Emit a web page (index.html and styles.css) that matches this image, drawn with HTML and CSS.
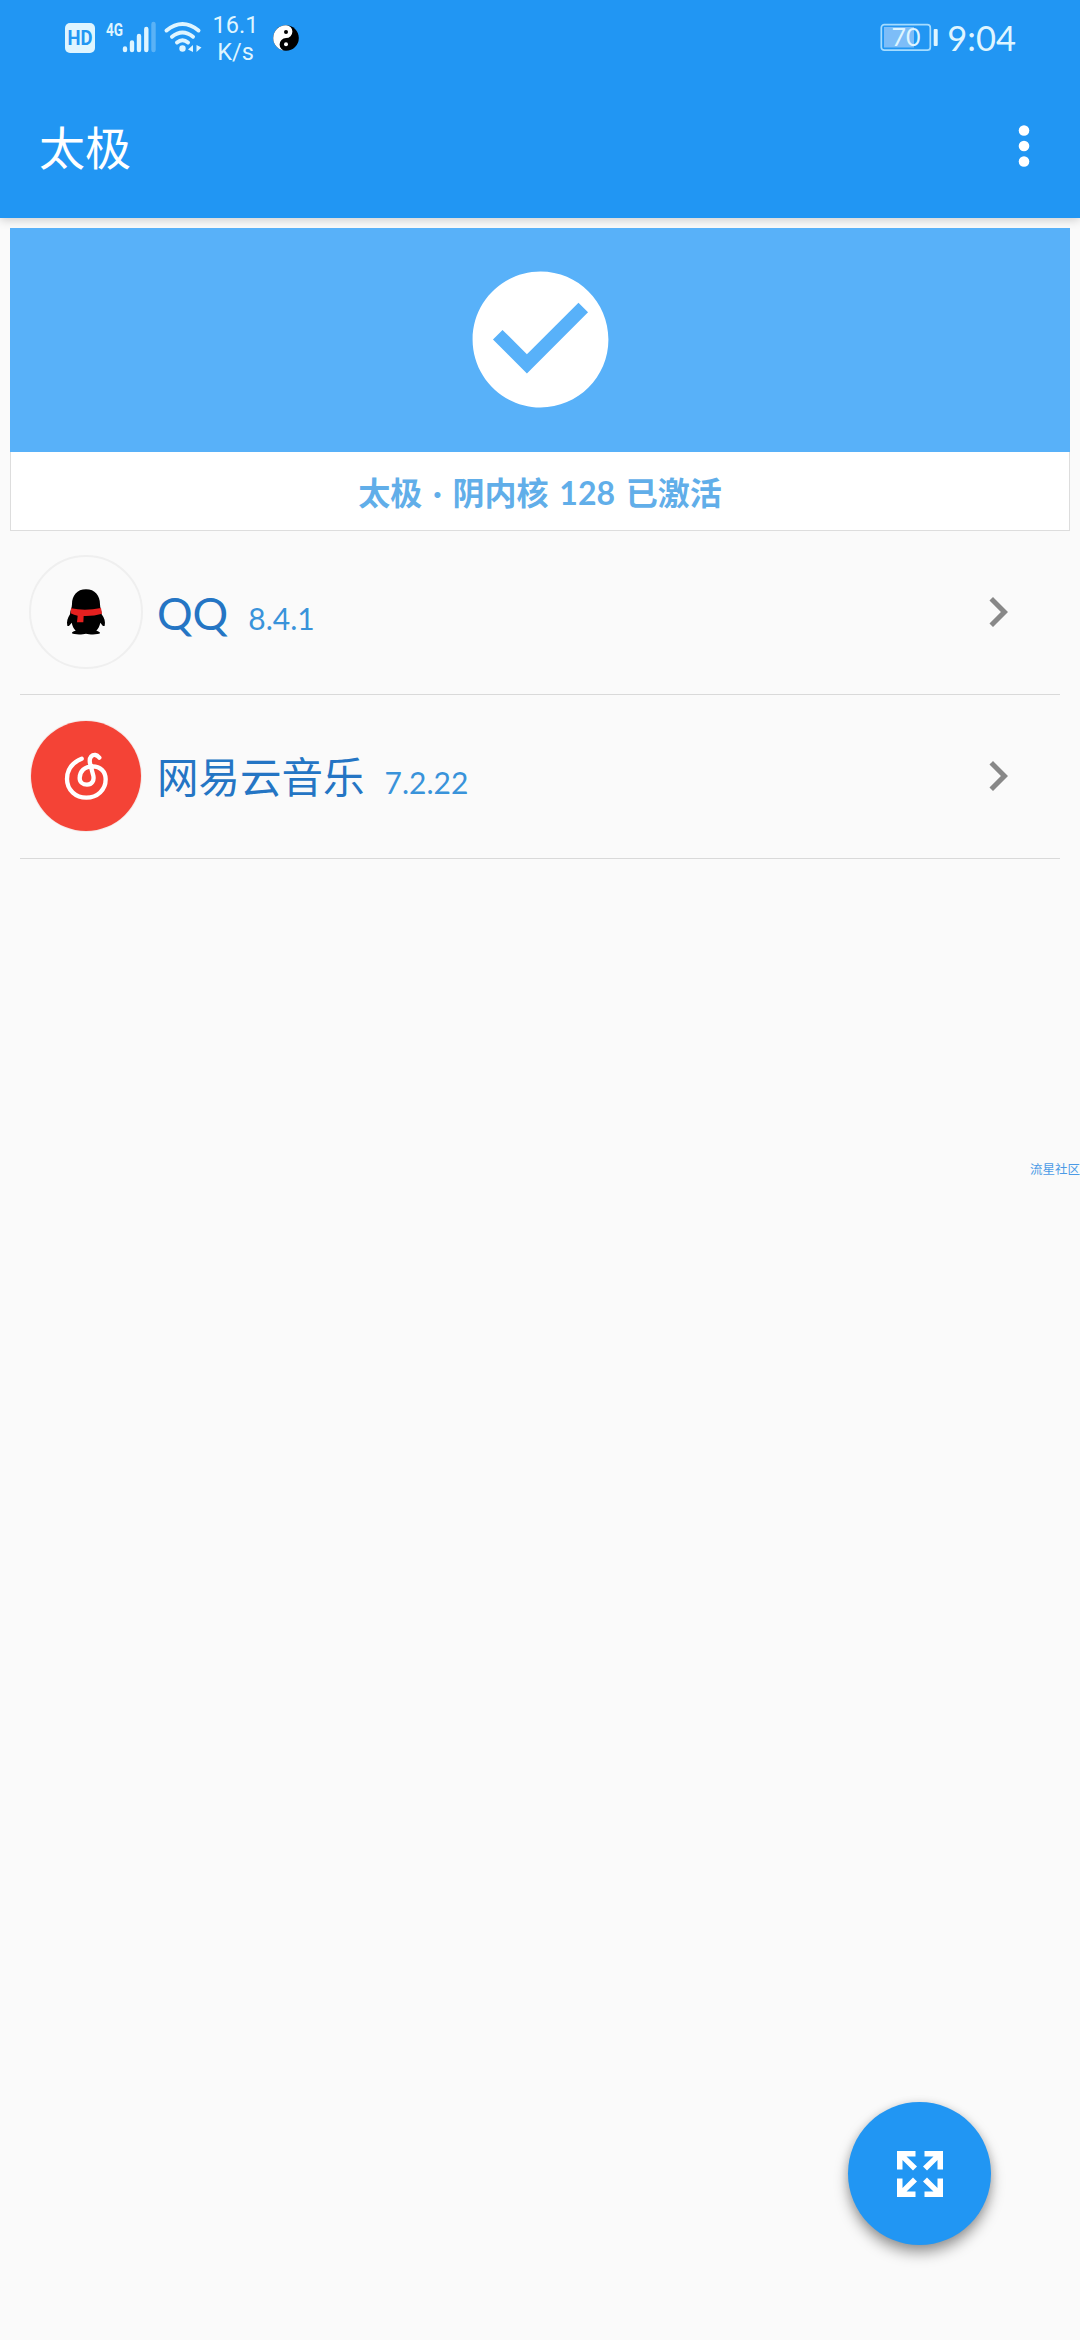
FILE: index.html
```html
<!DOCTYPE html>
<html lang="zh-CN">
<head>
<meta charset="utf-8">
<title>太极</title>
<link rel="stylesheet" href="styles.css">
</head>
<body>
<header class="header">
  <div class="status">
    <svg class="status-icons" viewBox="0 0 144 76">
      <rect x="0" y="23" width="30" height="30" rx="5" fill="#dff5ff"/>
      <text class="hd" x="15" y="45" text-anchor="middle" textLength="25" lengthAdjust="spacingAndGlyphs">HD</text>
      <text class="net" x="41" y="36" textLength="17" lengthAdjust="spacingAndGlyphs">4G</text>
      <g stroke="#dff5ff" stroke-width="4.4" stroke-linecap="round">
        <path d="M60 48.5v1.5M67 42.500v7.500M74 36v14M81.300 29v21"/>
        <path d="M88.500 24v26" opacity=".3"/>
      </g>
      <g fill="none" stroke="#dff5ff" stroke-width="4" stroke-linecap="round">
        <path d="M101.500 30.500q16-13 32 0"/>
        <path d="M107 36.700q10.500-8.500 21 0"/>
        <path d="M112 42.500q5.500-4.500 11 0"/>
      </g>
      <circle cx="117.500" cy="48.500" r="3.200" fill="#dff5ff"/>
      <path d="M128 45v7l-5-2.500zM131.500 45v7l5-4.500z" fill="#dff5ff"/>
    </svg>
    <div class="speed"><span>16.1</span><span>K/s</span></div>
    <svg class="taiji" viewBox="0 0 26 26">
      <circle cx="13" cy="13" r="12.800" fill="#000"/>
      <path d="M13 .2a12.800 12.800 0 0 0 0 25.600a6.400 6.400 0 0 1 0-12.800a6.400 6.400 0 0 0 0-12.800z" fill="#fff"/>
      <circle cx="13" cy="6.900" r="2" fill="#000"/>
      <circle cx="13" cy="19.300" r="2" fill="#fff"/>
    </svg>
    <div class="status-right">
      <svg class="battery" viewBox="0 0 60 40">
        <rect x="1.300" y="6.700" width="49" height="25.500" rx="3" fill="none" stroke="#a5dcff" stroke-width="1.700"/>
        <rect x="4" y="9" width="30" height="20.500" fill="#7dbdf8"/>
        <rect x="53.700" y="11" width="4" height="17" rx="1" fill="#dff5ff"/>
        <text class="level" x="26" y="28" text-anchor="middle">70</text>
      </svg>
      <span class="clock">9:04</span>
    </div>
  </div>
  <div class="appbar">
    <h1 class="title">太极</h1>
    <svg class="more" viewBox="0 0 12 44"><circle cx="6" cy="6.500" r="5.300"/><circle cx="6" cy="22" r="5.300"/><circle cx="6" cy="37.500" r="5.300"/></svg>
  </div>
</header>
<main class="content">
  <section class="card">
    <div class="banner">
      <svg class="check" viewBox="0 0 24 24"><path d="M12 2C6.480 2 2 6.480 2 12s4.480 10 10 10 10-4.480 10-10S17.520 2 12 2zm-2 15l-5-5 1.410-1.410L10 14.170l7.590-7.590L19 8l-9 9z"/></svg>
    </div>
    <div class="state">太极 · 阴内核 128 已激活</div>
  </section>
  <ul class="apps">
    <li class="app">
      <svg class="avatar" viewBox="0 0 114 114">
        <circle cx="57" cy="57" r="56" fill="#fafafa" stroke="#efefef" stroke-width="2"/>
        <g transform="translate(-29 -35) scale(.33333)">
          <path d="M258 208c-27 0-42 19-42 45c0 10-6 20-6 30c-7 10-11 23-8 34c2 4 8-2 13-9c2 10 6 17 12 24c-8 2-13 5-11 8c5 4 32 4 42 1c10 3 37 3 42-1c2-3-4-6-11-8c6-7 10-14 12-24c5 7 10 13 13 9c3-11-1-24-9-34c0-10-5-20-5-30c0-26-15-45-42-45z" fill="#000"/>
          <path d="M213 265q43 9 90-1l3 17q-25 8-55 7l-1 19h-19l2-20q-11-1-21-7z" fill="#e5201f"/>
        </g>
      </svg>
      <span class="name latin">QQ</span><span class="version">8.4.1</span>
      <svg class="chevron" viewBox="0 0 24 24"><path d="M10 6L8.590 7.410 13.170 12l-4.580 4.590L10 18l6-6z"/></svg>
    </li>
    <li class="app">
      <svg class="avatar" viewBox="0 0 114 114">
        <circle cx="57" cy="57" r="56" fill="#f5e9e8"/>
        <circle cx="57" cy="57" r="55" fill="#f44336"/>
        <path transform="translate(-29 -29) scale(.33333)" d="M245 206C216 218 201 240 201 267C201 301 228 323 259 323C292 323 317 300 317 268C317 244 300 229 278 229C254 229 239 244 239 264C239 277 249 284 261 284C276 284 283 272 280 257L270 220C266 200 278 194 286 195Q292 196 298 203" fill="none" stroke="#fff" stroke-width="13" stroke-linecap="round"/>
      </svg>
      <span class="name">网易云音乐</span><span class="version">7.2.22</span>
      <svg class="chevron" viewBox="0 0 24 24"><path d="M10 6L8.590 7.410 13.170 12l-4.580 4.590L10 18l6-6z"/></svg>
    </li>
  </ul>
</main>
<div class="watermark">流星社区</div>
<button class="fab" aria-label="全屏">
  <svg viewBox="0 0 46 46"><path d="M0 0h18.500v5.500h-9l10.500 10-4 4L5.500 9v9.500H0zM46 0v18.500h-5.500V9L30 19.500l-4-4L36.500 5.500h-9V0zM0 46V27.500h5.500V37L16 26.500l4 4L9.500 40.500h9V46zM46 46H27.500v-5.500h9L26 30.500l4-4L40.500 37v-9.500H46z"/></svg>
</button>
</body>
</html>
```
FILE: styles.css
```css
* { box-sizing: border-box; margin: 0; padding: 0; }
body {
  position: relative;
  width: 1080px;
  height: 2340px;
  overflow: hidden;
  background: #fafafa;
  font-family: Lato, "Noto Sans CJK SC", sans-serif;
}
svg { display: block; flex: none; overflow: visible; }
.header {
  height: 218px;
  background: #2196f3;
  box-shadow: 0 2px 9px rgba(0, 0, 0, .18);
}
.status {
  display: flex;
  height: 76px;
  padding: 0 64px 0 65px;
  color: #dff5ff;
}
.status-icons { width: 144px; height: 76px; }
.hd { font: 700 21px Roboto, sans-serif; fill: #2196f3; }
.net { font: 700 19px Roboto, sans-serif; fill: #dff5ff; }
.speed {
  display: flex;
  flex-direction: column;
  width: 53px;
  padding-top: 12px;
  text-align: center;
  font: 23.500px/27px Roboto, sans-serif;
}
.taiji { width: 26px; height: 26px; margin: 25px 0 0 11px; }
.status-right { display: flex; margin-left: auto; }
.battery { width: 60px; height: 40px; margin: 18px 7px 0 0; }
.level { font: 25px Lato, sans-serif; fill: #dff5ff; }
.clock { font-size: 34.500px; line-height: 40px; margin-top: 18px; }
.appbar {
  display: flex;
  align-items: center;
  justify-content: space-between;
  height: 142px;
  padding: 0 50px 2px 39px;
}
.title { margin-top: 4px; color: #fff; font-size: 46px; font-weight: 400; line-height: 60px; }
.more { width: 12px; height: 44px; fill: #fff; }
.content { padding: 10px; }
.card { height: 303px; border: 1px solid #ddd; border-top: 0; background: #fff; }
.banner {
  display: flex;
  justify-content: center;
  height: 224px;
  margin: 0 -1px;
  padding-top: 30px;
  background: #58b1f9;
}
.check { width: 163px; height: 163px; fill: #fff; }
.state {
  text-align: center;
  line-height: 82px;
  font-size: 32px;
  font-weight: 700;
  word-spacing: 3px;
  color: #61aee9;
}
.apps { padding: 0 10px; list-style: none; }
.app {
  display: flex;
  align-items: center;
  height: 164px;
  border-bottom: 1px solid #d9d9d9;
  padding: 0 32px 0 9px;
}
.avatar { width: 114px; height: 114px; margin-bottom: 2px; }
.name { margin-left: 14px; font-size: 41.500px; line-height: 60px; color: #2475c4; }
.latin { font-size: 44.500px; }
.version { margin: 11px 0 0 20px; font-size: 30px; line-height: 40px; color: #3993da; }
.chevron { width: 60px; height: 60px; margin: 0 0 2px auto; fill: #888; }
.watermark {
  position: absolute;
  top: 1160px;
  right: 0;
  font-size: 12.500px;
  line-height: 20px;
  color: #4b9ae6;
}
.fab {
  position: absolute;
  left: 848px;
  top: 2102px;
  display: grid;
  place-items: center;
  width: 143px;
  height: 143px;
  border: 0;
  border-radius: 50%;
  background: #2196f3;
  box-shadow: 0 8px 14px rgba(0, 0, 0, .36), 0 1px 8px rgba(0, 0, 0, .12);
}
.fab svg { width: 46px; height: 46px; fill: #fff; }
```
